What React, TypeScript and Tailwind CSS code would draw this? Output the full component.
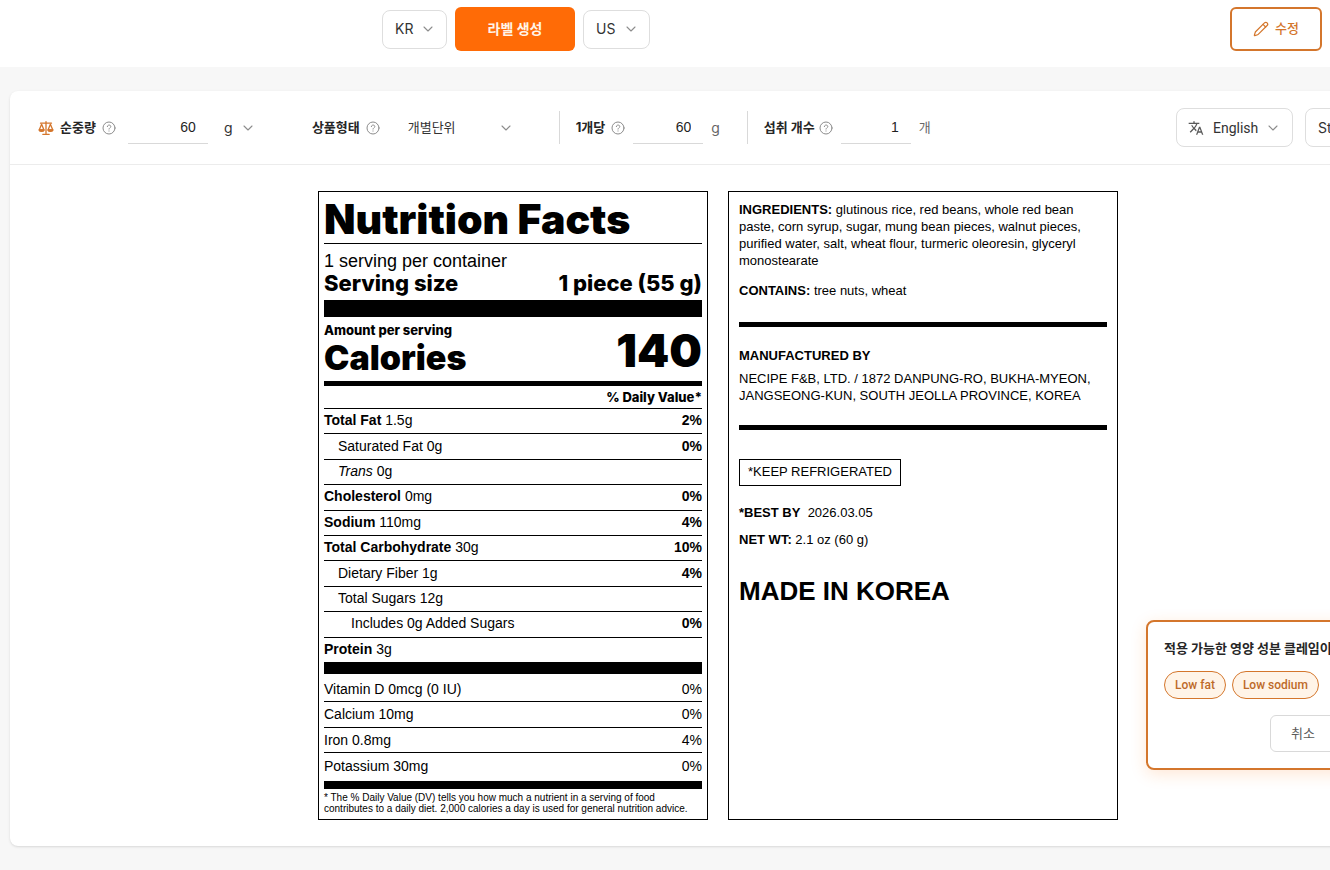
import React from "react";
import { ChevronDown, Pencil } from "lucide-react";
import { MdTranslate } from "react-icons/md";

interface NutrientRow {
  name: string;
  amount: string;
  percent?: string;
  level?: number;
  italic?: boolean;
}

const nutrients: NutrientRow[] = [
  { name: "Total Fat", amount: "1.5g", percent: "2%" },
  { name: "Saturated Fat", amount: "0g", percent: "0%", level: 1 },
  { name: "Trans", amount: "0g", level: 1, italic: true },
  { name: "Cholesterol", amount: "0mg", percent: "0%" },
  { name: "Sodium", amount: "110mg", percent: "4%" },
  { name: "Total Carbohydrate", amount: "30g", percent: "10%" },
  { name: "Dietary Fiber", amount: "1g", percent: "4%", level: 1 },
  { name: "Total Sugars", amount: "12g", level: 1 },
  { name: "Includes 0g Added Sugars", amount: "", percent: "0%", level: 2 },
  { name: "Protein", amount: "3g" },
];

const vitamins = [
  { name: "Vitamin D 0mcg (0 IU)", percent: "0%" },
  { name: "Calcium 10mg", percent: "0%" },
  { name: "Iron 0.8mg", percent: "4%" },
  { name: "Potassium 30mg", percent: "0%" },
];

const indents = ["", "pl-[14px]", "pl-[27px]"];

const ScaleIcon: React.FC = () => (
  <svg
    className="h-4 w-4 shrink-0 text-[#d4762c]"
    viewBox="0 0 16 16"
    fill="none"
    stroke="currentColor"
    strokeWidth={1.3}
    strokeLinecap="round"
    strokeLinejoin="round"
  >
    <path d="M2.5 3.2h11M8 1.6v12.6M4.8 14.3h6.4" />
    <path d="M3.6 4.2 1.2 10h4.8zM12.4 4.2 10 10h4.8z" />
    <path d="M1.2 10c.4 1.9 4.4 1.9 4.8 0zM10 10c.4 1.9 4.4 1.9 4.8 0z" fill="currentColor" />
  </svg>
);

const HelpIcon: React.FC = () => (
  <svg
    className="h-[14px] w-[14px] shrink-0 text-[#8c8c8c]"
    viewBox="0 0 14 14"
    fill="none"
    stroke="currentColor"
    strokeWidth={1}
    strokeLinecap="round"
  >
    <circle cx="7" cy="7" r="6" />
    <path d="M5.3 5.6c0-2.1 3.5-2.1 3.5 0 0 1.2-1.8 1.2-1.8 2.5M7 9.9v.2" />
  </svg>
);

interface DropdownProps {
  label: string;
  value: string;
  className: string;
  chevron: string;
  icon?: React.ReactNode;
}

const Dropdown: React.FC<DropdownProps> = ({
  label,
  value,
  className,
  chevron,
  icon,
}) => (
  <div className="relative flex shrink-0 items-center">
    {icon && <span className="absolute left-3 text-[#595959]">{icon}</span>}
    <select aria-label={label} defaultValue={value} className={`appearance-none ${className}`}>
      <option>{value}</option>
    </select>
    <ChevronDown
      className={`pointer-events-none absolute h-4 w-4 text-[#8c8c8c] ${chevron}`}
      strokeWidth={1.6}
    />
  </div>
);

interface FieldProps {
  id: string;
  value: string;
  className: string;
}

const NumberField: React.FC<FieldProps> = ({ id, value, className }) => (
  <input
    id={id}
    type="text"
    inputMode="numeric"
    defaultValue={value}
    className={`h-[33px] shrink-0 border-b border-[#d9d9d9] bg-transparent pr-3 text-right font-['Liberation_Sans',Arial,sans-serif] text-sm text-[#1f1f1f] outline-none ${className}`}
  />
);

const boxed = "h-[39px] rounded-lg border border-[#dedede] bg-white text-sm text-[#333]";
const fieldLabel = "shrink-0 whitespace-nowrap text-[13px] font-bold text-[#262626]";

const Header: React.FC = () => (
  <header className="flex h-[67px] items-start bg-white pt-[7px] pr-2 pl-[382px]">
    <div className="flex h-11 items-center gap-2">
      <Dropdown label="출발 국가" value="KR" className={`${boxed} w-[65px] pl-3`} chevron="right-[11px]" />
      <button className="h-11 w-[120px] rounded-md bg-[#ff6b06] text-sm font-bold text-[#fff4e8]">
        라벨 생성
      </button>
      <Dropdown label="대상 국가" value="US" className={`${boxed} w-[67px] pl-3`} chevron="right-[11px]" />
    </div>
    <button className="ml-auto flex h-11 w-[92px] items-center justify-center gap-[6px] rounded-md border-2 border-[#d4762c] bg-white text-[13px] font-medium text-[#d4762c]">
      <Pencil className="h-4 w-4" strokeWidth={1.8} />
      수정
    </button>
  </header>
);

const Toolbar: React.FC = () => (
  <div className="flex h-[74px] items-center border-b border-[#ececec] pr-4 pl-7">
    <ScaleIcon />
    <label htmlFor="net-weight" className={`${fieldLabel} mr-[6px] ml-[6px]`}>
      순중량
    </label>
    <HelpIcon />
    <div className="ml-3 flex items-center gap-4">
      <NumberField id="net-weight" value="60" className="w-20" />
      <Dropdown label="단위" value="g" className="w-8 text-sm text-[#333]" chevron="right-0" />
    </div>

    <span className={`${fieldLabel} mr-[6px] ml-14`}>상품형태</span>
    <HelpIcon />
    <div className="ml-7">
      <Dropdown
        label="상품형태"
        value="개별단위"
        className="w-[106px] text-[13px] text-[#333]"
        chevron="right-0"
      />
    </div>

    <div className="ml-[45px] flex items-center border-l border-[#d9d9d9] pl-4">
      <label htmlFor="unit-weight" className={`${fieldLabel} mr-[6px]`}>
        1개당
      </label>
      <HelpIcon />
      <NumberField id="unit-weight" value="60" className="ml-2 w-[70px]" />
      <span className="ml-2 text-sm text-[#666]">g</span>
    </div>

    <div className="ml-[27px] flex items-center border-l border-[#d9d9d9] pl-4">
      <label htmlFor="serving-count" className={`${fieldLabel} mr-1`}>
        섭취 개수
      </label>
      <HelpIcon />
      <NumberField id="serving-count" value="1" className="ml-2 w-[70px]" />
      <span className="ml-2 text-[13px] text-[#666]">개</span>
    </div>

    <div className="ml-auto flex gap-3">
      <Dropdown
        label="언어"
        value="English"
        className={`${boxed} w-[117px] pl-9 font-['Roboto',sans-serif]`}
        chevron="right-[12px]"
        icon={<MdTranslate className="h-4 w-4" />}
      />
      <Dropdown label="라벨 형식" value="Standard" className={`${boxed} w-[105px] pl-3`} chevron="right-3" />
    </div>
  </div>
);

const NutritionFacts: React.FC = () => (
  <section className="w-[390px] border border-black bg-white px-[5px] font-['Liberation_Sans',Arial,sans-serif] text-black">
    <h1 className="h-[52px] border-b border-black font-['Inter',sans-serif] text-[41px] leading-[54px] font-black">
      Nutrition Facts
    </h1>
    <p className="mt-[7px] text-lg leading-[20px]">1 serving per container</p>
    <div className="flex justify-between font-['Inter',sans-serif] text-[22px] leading-[25px] font-extrabold">
      <span>Serving size</span>
      <span>1 piece (55 g)</span>
    </div>
    <div className="mt-1 h-[17px] bg-black" />
    <div className="flex h-16 items-end justify-between font-['Inter',sans-serif] font-black">
      <div className="pb-[3px]">
        <p className="text-[13px] leading-4 font-extrabold">Amount per serving</p>
        <p className="text-[34px] leading-[40px]">Calories</p>
      </div>
      <span className="pb-[5px] text-[46px] leading-[52px]">140</span>
    </div>
    <div className="h-[5px] bg-black" />
    <p className="text-right font-['Inter',sans-serif] text-[13px] leading-[22px] font-extrabold">
      % Daily Value*
    </p>
    <table className="h-[254px] w-full border-separate border-spacing-0 text-sm leading-4">
      <tbody>
        {nutrients.map((row) => (
          <tr key={row.name}>
            <td className={`border-t border-black pb-[2px] ${indents[row.level ?? 0]}`}>
              <span className={row.italic ? "italic" : row.level ? "" : "font-bold"}>
                {row.name}
              </span>{" "}
              {row.amount}
            </td>
            <td className="border-t border-black pb-[2px] text-right font-bold">
              {row.percent}
            </td>
          </tr>
        ))}
      </tbody>
    </table>
    <div className="h-3 bg-black" />
    <table className="my-[3px] h-[101px] w-full border-separate border-spacing-0 text-sm leading-4">
      <tbody>
        {vitamins.map((row, i) => (
          <tr key={row.name}>
            <td className={`p-0 ${i > 0 ? "border-t border-black" : ""}`}>{row.name}</td>
            <td className={`p-0 text-right ${i > 0 ? "border-t border-black" : ""}`}>
              {row.percent}
            </td>
          </tr>
        ))}
      </tbody>
    </table>
    <div className="h-2 bg-black" />
    <p className="mt-[3px] pb-[5px] text-[10px] leading-[11px]">
      * The % Daily Value (DV) tells you how much a nutrient in a serving of food
      contributes to a daily diet. 2,000 calories a day is used for general nutrition advice.
    </p>
  </section>
);

const ProductInfo: React.FC = () => (
  <section className="w-[390px] border border-black bg-white px-[10px] pt-[9px] font-['Liberation_Sans',Arial,sans-serif] text-[13px] leading-[17px] text-black">
    <p>
      <b>INGREDIENTS:</b> glutinous rice, red beans, whole red bean paste, corn syrup,
      sugar, mung bean pieces, walnut pieces, purified water, salt, wheat flour, turmeric
      oleoresin, glyceryl monostearate
    </p>
    <p className="mt-[13px]">
      <b>CONTAINS:</b> tree nuts, wheat
    </p>
    <div className="mt-[23px] h-[5px] bg-black" />
    <h2 className="mt-5 font-bold">MANUFACTURED BY</h2>
    <p className="mt-[6px]">
      NECIPE F&amp;B, LTD. / 1872 DANPUNG-RO, BUKHA-MYEON, JANGSEONG-KUN, SOUTH JEOLLA
      PROVINCE, KOREA
    </p>
    <div className="mt-[21px] h-[5px] bg-black" />
    <p className="mt-[29px] h-[27px] w-fit border border-black px-2 leading-6">*KEEP REFRIGERATED</p>
    <p className="mt-[18px]">
      <b>*BEST BY</b>&nbsp; 2026.03.05
    </p>
    <p className="mt-[10px]">
      <b>NET WT:</b> 2.1 oz (60 g)
    </p>
    <p className="mt-7 text-[26px] leading-[30px] font-bold">MADE IN KOREA</p>
  </section>
);

const ClaimPanel: React.FC = () => (
  <aside className="absolute top-[529px] left-[1136px] h-[150px] w-[400px] rounded-lg border-2 border-[#d4762c] bg-white px-4 pt-4 shadow-[0_4px_16px_rgba(255,122,20,0.18)]">
    <p className="text-[13px] leading-5 font-bold text-[#262626]">
      적용 가능한 영양 성분 클레임이 있습니다
    </p>
    <div className="mt-[13px] flex gap-[6px]">
      {["Low fat", "Low sodium"].map((claim) => (
        <button
          key={claim}
          className="h-7 rounded-full border border-[#d4762c] bg-[#fff4e8] px-[10px] font-['Roboto',sans-serif] text-xs font-medium text-[#bd6a28]"
        >
          {claim}
        </button>
      ))}
    </div>
    <button className="mt-4 ml-[106px] h-[37px] w-[66px] rounded-md border border-[#d9d9d9] text-[13px] text-[#595959]">
      취소
    </button>
  </aside>
);

const App: React.FC = () => {
  return (
    <div className="min-h-screen overflow-hidden bg-[#f7f7f7] pb-6 font-['Inter','Noto_Sans_CJK_KR',sans-serif]">
      <Header />
      <main className="relative mt-6 ml-[10px] min-w-[1416px] rounded-lg bg-white shadow-sm">
        <Toolbar />
        <div className="flex justify-center gap-5 pt-[26px] pb-[26px]">
          <NutritionFacts />
          <ProductInfo />
        </div>
        <ClaimPanel />
      </main>
    </div>
  );
};

export default App;
